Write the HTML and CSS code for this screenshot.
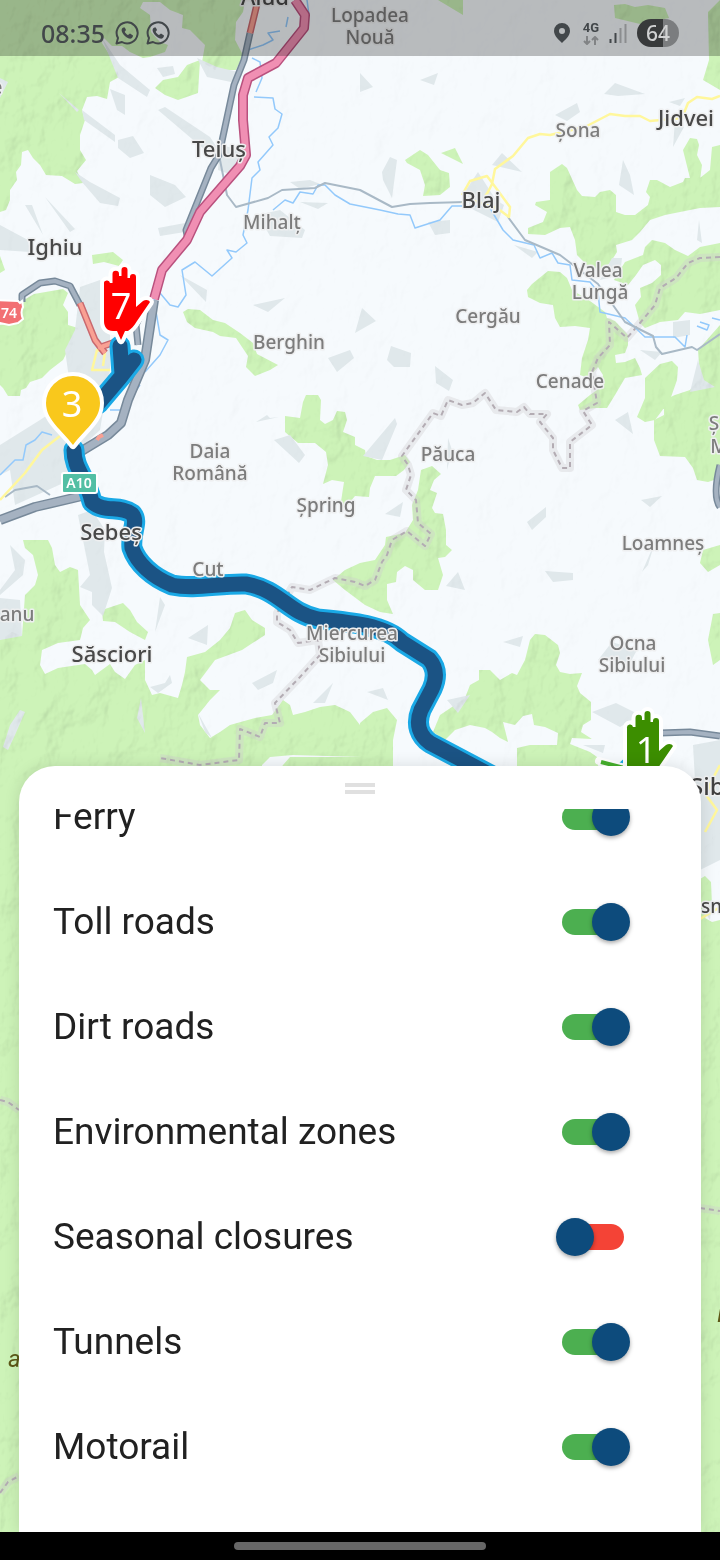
FILE: index.html
```
<!DOCTYPE html>
<html lang="en">

<head>
    <meta charset="UTF-8">
    <meta name="viewport" content="width=device-width, initial-scale=1.0">
    <title>Route options</title>
    <link rel="stylesheet" href="styles.css">
</head>

<body>
    <div class="screen">

        <!-- map -->
        <svg class="map" viewBox="0 0 720 1560" preserveAspectRatio="xMidYMin slice" role="img" aria-label="Route map">
            <defs>
                <filter id="relief" x="0" y="0" width="100%" height="100%">
                    <feTurbulence type="fractalNoise" baseFrequency="0.035 0.025" numOctaves="4" seed="8" />
                    <feDiffuseLighting surfaceScale="5" diffuseConstant="1.15" lighting-color="#fff">
                        <feDistantLight azimuth="225" elevation="60" />
                    </feDiffuseLighting>
                </filter>
                <path id="hand" d="M104 284a3 3 0 0 1 6-1h2.500V274a3 3 0 0 1 6.500 0v2h2.500V270a3 3 0 0 1 6 0v8h2.500V277a3 3 0 0 1 6 0v30l7-6c3-2 6-1 7 1l-13 19c-3 5-6 8-9 10h-3l-4 9-4-9h-4c-6 0-9-4-9-10Z" />
                <clipPath id="woods">
                    <use href="#forest" />
                </clipPath>
            </defs>

            <rect class="land" width="720" height="1560" />

            <path id="forest" class="forest" d="M0 0H245L243 12 236 22 235 40 243 55 236 70 215 70 202 62 205 45 190 30 182 28 183 15 170 10 160 2 143 2 140 8 150 15 151 32 160 42 168 45 165 52 150 57 143 58 130 52 122 46 112 46 103 37 102 43 116 65 119 77 110 82 107 99 97 96 87 97 82 110 85 120 80 135 80 150 86 160 77 171 83 183 75 184 62 176 46 175 40 165 33 158 28 150 22 152 21 165 16 172 17 180 10 190 10 200 6 210 0 212Z
                M155 88 163 80 178 77 187 65 200 60 198 93 178 100 165 95Z
                M92 255 113 252 123 260 119 266 104 262 93 264Z
                M0 256 5 270 0 273Z
                M24 300 34 294 63 289 68 293 63 305 68 312 68 325 78 328 72 340 73 345 68 350 63 360 50 370 42 378 30 382 26 388 21 390 20 396 8 396 3 388 0 385V325L20 322Z
                M183 312 188 309 200 310 213 320 225 323 240 333 253 343 257 354 278 365 270 370 255 376 246 367 248 356 236 338 220 336 213 332 195 328 187 322Z
                M306 395 318 395 321 400 320 420 325 424 333 420 337 411 345 412 347 420 343 432 355 437 355 445 365 450 366 456 377 460 390 460 405 455 410 462 404 470 396 476 375 476 370 488 369 497 355 496 345 508 340 508 344 482 332 480 323 484 328 465 326 452 315 443 298 443 285 432 285 416 300 418 303 402Z
                M421 470 432 466 441 474 434 480 430 490 437 493 432 508 435 513 443 514 446 530 446 545 452 550 445 557 438 558 443 575 438 590 425 590 413 580 413 570 405 566 397 572 396 582 387 584 387 600 393 614 380 612 365 605 345 590 333 580 345 570 360 563 375 560 385 545 386 537 405 533 413 520 412 505 418 490Z
                M550 172 562 164 567 168 577 190 582 196 595 197 600 192 610 190 616 195 616 212 625 215 635 215 648 205 650 197 646 192 650 180 657 180 670 187 683 182 685 178 700 178 710 170 712 147 720 145V207L700 208 665 215 650 220 640 232 632 240 616 245 617 252 610 263 600 270 588 266 577 255 575 240 570 227 560 228 545 235 528 234 528 228 543 222 547 212 535 205 536 202 550 200Z
                M683 150 690 138 697 139 699 145 697 155 702 165 700 180 690 178Z
                M614 280 625 262 643 255 645 247 652 240 665 243 675 250 688 256 700 247 720 243V310L700 314 685 312 678 320 660 322 645 328 640 323 635 305 641 297 640 288 652 283 661 275 661 265 655 260 643 265 636 275 628 285Z
                M527 290 532 284 548 271 560 272 567 278 572 290 590 301 605 312 607 318 615 321 628 335 628 345 625 353 615 355 616 363 625 362 635 358 640 368 642 375 625 378 615 395 607 408 595 408 580 410 578 405 590 395 600 388 603 375 598 367 588 378 580 375 582 358 588 340 590 328 575 326 560 327 555 318 553 305 540 303 528 297Z
                M645 378 660 364 672 361 678 367 677 380 670 400 655 420 645 422 637 417 645 398Z
                M698 350 720 325V478L708 482 697 480 693 468 685 457 660 456 654 440 654 420 664 415 664 400 675 395 690 390 700 378Z
                M703 550 720 545V565L708 572 700 563ZM713 614 720 613V660L713 665 708 640Z
                M405 160 420 150 428 155 440 170 449 173 450 187 440 195 423 196 425 185 420 170 407 163ZM441 153 455 148 463 164Z
                M614 5 625 4 635 7 648 5 665 8 669 18 640 24 615 18ZM438 0H463V15ZM708 12 720 0V90L703 80 709 60Z
                M535 634 545 635 558 645 560 653 556 665 560 672 570 674 582 673 577 686 580 693 591 702 591 720 583 725 581 732 592 739 572 738 570 744 590 752 597 757 600 780H517V748L530 745 557 745 558 733 545 727 534 725 532 714 523 716 515 725 503 722 508 742 500 738 492 732 485 728 470 725 455 730 445 740 433 732 440 715 455 705 465 698 470 685 479 680 479 670 490 670 500 680 512 673 517 675 525 660 530 640Z
                M360 723 373 712 387 708 397 720 393 740V800H260L283 765 290 757 360 757Z
                M23 540 48 540 52 548 55 565 60 572 70 567 78 570 80 605 90 620 83 628 80 640 58 643 42 650 40 665 45 674 58 668 85 664 92 670 95 675 110 664 115 672 125 679 135 665 145 660 145 680 152 695 160 693 178 698 182 685 185 672 187 657 205 652 220 640 230 628 235 613 245 610 252 620 265 628 265 635 242 650 215 660 200 680 210 690 220 690 210 700 198 715 200 725 210 738 220 732 230 725 255 718 272 715 283 700 290 705 293 715 305 712 320 707 335 705 350 712 360 725 362 757 293 755 270 757 262 765V820H60V1560H0V640L12 632 22 636 25 595 35 585 38 575 33 555 25 548Z
                M102 610 123 603 130 610 137 622 148 632 145 640 130 632 115 622 103 621Z
                M690 850 704 832 713 828 713 838 700 855ZM690 885 705 876 711 882 712 905 705 918 712 922 720 920V1560H690Z" />

            <!-- built-up areas -->
            <path class="town" d="M102 38 120 65 150 90 147 97 118 78ZM157 68 173 66 175 74 163 77ZM197 58 217 67 238 72 231 82 207 77ZM82 110 115 135 115 142 84 120ZM118 140 133 136 144 153 130 158 118 148ZM110 89 125 95 125 115 117 110ZM158 110 165 107 210 137 220 152 205 150ZM150 175 175 185 186 197 165 207 150 195ZM75 172 90 182 120 198 118 206 100 203 82 182ZM59 93 79 110 77 112ZM25 205 32 205 43 235ZM45 197 75 229 70 232ZM0 225 28 240 30 252 0 250ZM158 228 185 223 185 232 160 236ZM220 145 242 150 232 175 218 170ZM258 215 280 210 305 230 302 238 270 236ZM290 182 310 180 320 184 300 189ZM300 202 328 203 318 209ZM180 275 207 290 206 302ZM80 287 100 280 110 330 110 370 100 430 68 460 95 485 82 500 70 480 15 505 10 470 0 475V445L40 420 70 400 70 385 65 350 75 330ZM78 515 92 510 105 530 104 552 112 588 103 616 92 605 92 592 80 587 90 575ZM160 597 165 605 155 632ZM188 638 208 625 207 645ZM150 687 165 683 170 675 172 683 158 693ZM141 698 137 718 145 733ZM10 545 25 560 23 575 0 595V590L15 570ZM20 710 25 712 15 735 8 750 3 747 10 725ZM252 683 277 670 273 683 258 690ZM313 703 333 683 325 703ZM198 713 212 738 205 732ZM253 305 285 298 268 312ZM328 358 350 350 354 358 337 372ZM362 308 376 321 355 333ZM391 346 411 353 410 367 394 367 387 360ZM435 366 453 380 449 391 436 383ZM256 422 267 415 270 418 279 417ZM274 440 290 435 305 455 299 463ZM395 418 397 424 382 460 363 456ZM385 514 403 502 400 517ZM448 438 452 450 447 470ZM382 172 390 157 397 160 392 198 383 180ZM555 115 577 103 580 112 567 121ZM604 94 615 83 645 94 618 96ZM669 102 685 98 680 106ZM675 120 684 127 673 147ZM428 222 450 220 450 233 435 235ZM492 165 502 153 522 172ZM466 190 478 172 496 200 504 205 498 222 470 208ZM623 160 630 175 634 195 619 185ZM699 220 702 243 697 240ZM514 245 538 252 532 258ZM612 258 622 258 620 275 600 280ZM673 322 690 320 690 335 673 338ZM640 350 662 352 655 360ZM698 360 704 380 715 387 690 392ZM615 420 628 412 633 434ZM527 522 546 507 546 517 532 530ZM641 500 662 496 650 507ZM655 542 648 565 642 572ZM545 571 573 573 573 580 553 582ZM446 586 458 572 465 590ZM503 642 523 636 520 647ZM367 692 383 688 388 700ZM447 700 470 695 458 713ZM592 712 616 703 640 715 620 727ZM583 745 605 745 603 753ZM598 660 612 642 637 650 630 663ZM0 598 20 600 22 636 0 640ZM693 745 720 740V860L700 870ZM700 905 712 900 710 920ZM0 78 8 82 0 98ZM360 73 373 87 360 92ZM420 80 438 73 434 85Z" />

            <!-- hill shading -->
            <rect class="relief relief-light" width="720" height="1560" filter="url(#relief)" />
            <g class="relief" clip-path="url(#woods)">
                <rect width="720" height="1560" filter="url(#relief)" />
            </g>

            <!-- county borders -->
            <g class="border">
                <path id="border" d="M720 257 700 258 688 263 676 278 660 288 655 305 640 323 627 338 609 322 610 345 598 358 592 372 597 403 583 411 592 425 570 442 570 468 562 468 553 450 553 438 540 422 547 414 530 414 524 407 517 412 496 410 485 393 473 403 462 405 448 400 441 416 433 413 402 456 408 465 411 475 406 490 416 500 418 523 431 534 425 546 407 531 392 540 387 555 382 562 375 580 365 586 355 582 335 578 310 590 292 587 277 613 277 622 290 630 298 643 318 640 320 655 300 677 275 703 280 723 265 723 260 737 240 729 239 760 200 765 160 758" />
                <path d="M0 1100 8 1102 19 1110M0 1493 8 1482 19 1476M700 1208 720 1211" />
            </g>
            <use href="#border" class="border-dash" />
            <path class="border-dash" d="M0 1100 8 1102 19 1110M0 1493 8 1482 19 1476M700 1208 720 1211" />

            <!-- rivers -->
            <path class="river" d="M307 0 309 15 303 18M288 17 286 27M280 31 268 33 273 40 263 45 248 50M252 58 260 62 262 78 256 92M254 97 273 98 275 109 282 114 278 128 269 137 273 145 258 162 260 170 252 178 248 210 243 235 247 243 236 252 227 250 232 258 212 276 195 262 182 270 186 295 178 307 170 305 160 293 154 300 160 335 168 340 160 355 145 372M273 210 285 200 293 203 300 192 313 194 318 185 325 185 335 195 350 204 380 210 398 214 410 215 415 228 440 220 452 206 478 206 490 208 503 230 513 240 534 245 540 258 552 253 558 263 570 265 572 280 590 282 598 292 600 312 625 318 645 337 675 337 685 347 687 335M697 326 707 330 709 325 700 322M712 318 720 320M0 475 15 460 23 460 26 445 35 440 42 432 52 435M110 410 125 410 130 398 140 385" />

            <!-- secondary roads -->
            <path class="road-thin" d="M219 155 227 195 236 207 268 198 282 190 315 188 325 183 360 190 392 207 410 204 430 203 465 202M508 217 525 240 560 255 598 284 625 322 653 336 656 347 662 354 692 347 697 350 720 334M5 497 15 490 37 486 50 495" />
            <path class="road-yellow" d="M720 96 712 99 697 97 688 103 682 118 650 121 640 116 625 116 610 114 585 127 550 135 540 134 528 138 513 156 495 169 492 184 488 192 484 198M462 195 470 181 487 176 496 188 510 207 509 217 497 208 468 199 462 203M0 500 25 473 42 450 60 436M110 370 92 370 97 350 105 352 103 366M705 832 717 810 706 795 712 780 720 765M700 919 720 907" />

            <!-- main roads -->
            <g class="road-gray">
                <path class="casing" d="M250 33 244 60 234 85 219 155 211 168 186 230 188 240M22 302 22 295 40 283 55 281 70 286 80 305M720 736 690 732 660 733M720 465C715 485 715 500 720 507" />
                <path class="inner" d="M250 33 244 60 234 85 219 155 211 168 186 230 188 240M22 302 22 295 40 283 55 281 70 286 80 305M720 736 690 732 660 733M720 465C715 485 715 500 720 507" />
                <path class="casing wide" d="M0 520 35 507 82 496M80 452 108 435 121 423 128 400 145 360 154 300" />
                <path class="inner wide" d="M0 520 35 507 82 496M80 452 108 435 121 423 128 400 145 360 154 300" />
                <path class="casing" d="M145 305 136 325 138 345" />
                <path class="inner" d="M145 305 136 325 138 345" />
            </g>
            <g class="road-red">
                <path class="casing" d="M258 0 250 33M80 303 95 340 105 353M98 348 115 342" />
                <path class="inner" d="M258 0 250 33M80 303 95 340 105 353M98 348 115 342" />
                <path class="inner" d="M97 440 99 437 103 435" />
            </g>
            <g class="road-pink">
                <path class="casing" d="M295 0 305 15 304 28 276 63 248 78 243 95 243 120 246 155 240 166 200 212 187 240 162 270 154 299" />
                <path class="inner" d="M295 0 305 15 304 28 276 63 248 78 243 95 243 120 246 155 240 166 200 212 187 240 162 270 154 299" />
            </g>

            <!-- route -->
            <path class="route-edge" d="M120 346 122 374M134 360 120 378 98 404M74 450C74 470 86 476 92 502 104 513 120 505 132 514 139 522 130 532 132 548 137 563 152 577 172 585 195 590 220 583 246 584 280 590 288 613 318 619 350 622 385 625 402 642L429 659C437 668 437 678 432 689L421 710C415 725 420 736 430 743L500 780M625 772 640 758" />
            <path class="route" d="M120 346 122 374M134 360 120 378 98 404M74 450C74 470 86 476 92 502 104 513 120 505 132 514 139 522 130 532 132 548 137 563 152 577 172 585 195 590 220 583 246 584 280 590 288 613 318 619 350 622 385 625 402 642L429 659C437 668 437 678 432 689L421 710C415 725 420 736 430 743L500 780" />
            <path class="arrow-edge" d="M599 761 640 772" />
            <path class="arrow" d="M601 762 640 772" />

            <!-- road signs -->
            <rect class="sign sign-green" x="62" y="473" width="35" height="20" rx="2" />
            <text class="sign-text" x="79" y="488">A10</text>
            <path class="sign sign-red" d="M-10 300 18 301 20 303 22 301 23 307Q20 312 23 319L18 323 9 325 0 323H-10Z" />
            <text class="sign-text" x="9" y="318">74</text>

            <!-- place names -->
            <g class="place town-name">
                <text x="265" y="5">Aiud</text>
                <text x="219" y="157">Teiuș</text>
                <text x="55" y="255">Ighiu</text>
                <text x="481" y="208">Blaj</text>
                <text x="686" y="126">Jidvei</text>
                <text x="111" y="540">Sebeș</text>
                <text x="112" y="662">Săsciori</text>
            </g>
            <g class="place village">
                <text x="370" y="22">Lopadea</text>
                <text x="370" y="44">Nouă</text>
                <text x="578" y="137">Șona</text>
                <text x="272" y="229">Mihalț</text>
                <text x="598" y="277">Valea</text>
                <text x="600" y="299">Lungă</text>
                <text x="488" y="323">Cergău</text>
                <text x="289" y="349">Berghin</text>
                <text x="570" y="388">Cenade</text>
                <text x="210" y="458">Daia</text>
                <text x="210" y="480">Română</text>
                <text x="448" y="461">Păuca</text>
                <text x="326" y="512">Șpring</text>
                <text x="663" y="550">Loamneș</text>
                <text x="208" y="576">Cut</text>
                <text x="352" y="640">Miercurea</text>
                <text x="352" y="662">Sibiului</text>
                <text x="633" y="650">Ocna</text>
                <text x="632" y="672">Sibiului</text>
                <text x="17" y="621">anu</text>
                <text x="714" y="430">Ș</text>
                <text x="719" y="453">M</text>
                <text x="-3" y="94">e</text>
            </g>
            <g class="place city-name">
                <text x="690" y="795">Sibiu</text>
            </g>
            <text class="place cut-name" x="701" y="913">snădie</text>
            <text class="peak" x="8" y="1367">a</text>
            <text class="peak" x="717" y="1322">M</text>

            <!-- markers -->
            <g class="marker marker-red">
                <use href="#hand" />
                <text x="121" y="319">7</text>
            </g>
            <g class="marker marker-yellow">
                <path d="M73 445C62 430 46 420 46 403A27 27 0 0 1 100 403C100 420 84 430 73 445Z" />
                <text x="72" y="417">3</text>
            </g>
            <g class="marker marker-green">
                <use href="#hand" x="523" y="444" />
                <text x="646" y="763">1</text>
            </g>
        </svg>

        <!-- status bar -->
        <header class="status-bar">
            <div class="status-left">
                <time>08:35</time>
                <svg class="chat" viewBox="0 0 24 24" aria-hidden="true">
                    <path class="line" d="M1.500 22.500 3 17A10.500 10.500 0 1 1 7 21Z" />
                    <path d="M8.500 6.500C7 7 6 8.500 7 11c1.500 3 4 5.500 7 6.500 2 .5 4-.5 4-3l-3-2-2 1.500c-1.500-.7-2.700-2-3.300-3.300L11 9 9.800 6.500Z" />
                </svg>
                <svg class="chat" viewBox="0 0 24 24" aria-hidden="true">
                    <path class="line" d="M1.500 22.500 3 17A10.500 10.500 0 1 1 7 21Z" />
                    <path d="M8.500 6.500C7 7 6 8.500 7 11c1.500 3 4 5.500 7 6.500 2 .5 4-.5 4-3l-3-2-2 1.500c-1.500-.7-2.700-2-3.300-3.300L11 9 9.800 6.500Z" />
                </svg>
            </div>
            <div class="status-right">
                <svg class="pin" viewBox="0 0 16 20" aria-hidden="true">
                    <path fill-rule="evenodd" d="M8 0a8 8 0 0 1 8 8c0 5-5 9-8 12C5 17 0 13 0 8A8 8 0 0 1 8 0Zm0 5a3 3 0 1 0 0 6 3 3 0 0 0 0-6Z" />
                </svg>
                <div class="network">
                    <span>4G</span>
                    <svg viewBox="0 0 16 9" aria-hidden="true">
                        <path d="M4 0V8M1 5 4 8 7 5M12 9V1M9 4 12 1 15 4" />
                    </svg>
                </div>
                <svg class="signal" viewBox="0 0 18 20" aria-hidden="true">
                    <path d="M1.500 20V16M6.500 20V10" />
                    <path class="weak" d="M11.500 20V5M16.500 20V1" />
                </svg>
                <span class="battery">64</span>
            </div>
        </header>

        <!-- options sheet -->
        <main class="sheet">
            <div class="handle"></div>
            <div class="options">
                <ul class="option-list">
                    <li class="option">
                        <label for="ferry">Ferry</label>
                        <input type="checkbox" id="ferry" class="switch" checked>
                    </li>
                    <li class="option">
                        <label for="toll">Toll roads</label>
                        <input type="checkbox" id="toll" class="switch" checked>
                    </li>
                    <li class="option">
                        <label for="dirt">Dirt roads</label>
                        <input type="checkbox" id="dirt" class="switch" checked>
                    </li>
                    <li class="option">
                        <label for="zones">Environmental zones</label>
                        <input type="checkbox" id="zones" class="switch" checked>
                    </li>
                    <li class="option">
                        <label for="seasonal">Seasonal closures</label>
                        <input type="checkbox" id="seasonal" class="switch">
                    </li>
                    <li class="option">
                        <label for="tunnels">Tunnels</label>
                        <input type="checkbox" id="tunnels" class="switch" checked>
                    </li>
                    <li class="option">
                        <label for="motorail">Motorail</label>
                        <input type="checkbox" id="motorail" class="switch" checked>
                    </li>
                </ul>
            </div>
        </main>

        <div class="nav-bar">
            <div class="nav-pill"></div>
        </div>
    </div>
</body>

</html>
```
FILE: styles.css
```
* {
    box-sizing: border-box;
}

body {
    margin: 0;
    font-family: Roboto, "Liberation Sans", sans-serif;
    color: #212121;
}

.screen {
    position: relative;
    display: flex;
    flex-direction: column;
    min-height: 100vh;
    overflow: hidden;
}

/* map */
.map {
    position: absolute;
    top: 0;
    left: 0;
    width: 100%;
    height: 100%;
}

.land {
    fill: #f6fafd;
}

.forest {
    fill: #cdf3b8;
}

.town {
    fill: #e0e8eb;
}

.relief {
    mix-blend-mode: multiply;
    opacity: 0.25;
}

.relief-light {
    opacity: 0.08;
}

.border,
.border-dash,
.river,
.road-thin,
.road-yellow,
.casing,
.inner,
.route,
.route-edge,
.arrow,
.arrow-edge {
    fill: none;
    stroke-linejoin: round;
}

.border {
    stroke: #cfcbcf;
    stroke-opacity: 0.35;
    stroke-width: 8;
}

.border-dash {
    stroke: #b3acb3;
    stroke-width: 2;
    stroke-dasharray: 5 4;
}

.river {
    stroke: #93c9fb;
    stroke-width: 1.5;
}

.road-thin {
    stroke: #a9b9c6;
    stroke-width: 2;
}

.road-yellow {
    stroke: #fff79c;
    stroke-width: 2.5;
}

.casing {
    stroke-width: 7;
}

.inner {
    stroke-width: 4;
}

.wide.casing {
    stroke-width: 10;
}

.wide.inner {
    stroke-width: 7;
}

.road-gray .casing {
    stroke: #77899a;
}

.road-gray .inner {
    stroke: #a5b2c1;
}

.road-red .casing {
    stroke: #c9696f;
}

.road-red .inner {
    stroke: #f9a093;
}

.road-pink .casing {
    stroke: #b9517e;
    stroke-width: 10;
}

.road-pink .inner {
    stroke: #f08fb3;
    stroke-width: 7;
}

.route-edge {
    stroke: #1aa9e6;
    stroke-width: 21;
    stroke-linecap: round;
}

.route {
    stroke: #1b5384;
    stroke-width: 15;
    stroke-linecap: round;
}

.arrow-edge {
    stroke: #fff;
    stroke-width: 8;
    stroke-linecap: round;
}

.arrow {
    stroke: #45b02c;
    stroke-width: 4;
}

.sign {
    stroke: #fff;
    stroke-width: 2;
}

.sign-green {
    fill: #52bfa4;
}

.sign-red {
    fill: #f27073;
}

.sign-text {
    fill: #fff;
    font: 600 14px "Noto Sans", sans-serif;
    text-anchor: middle;
}

.place {
    font-family: "Noto Sans", sans-serif;
    font-size: 19px;
    font-weight: 500;
    text-anchor: middle;
    paint-order: stroke;
    stroke: #eeeff0;
    stroke-width: 3;
    stroke-linejoin: round;
}

.village {
    fill: #7c7c7c;
}

.town-name {
    fill: #484848;
    font-size: 22px;
}

.city-name {
    fill: #404040;
    font-size: 24px;
    text-anchor: start;
}

.cut-name {
    fill: #484848;
    text-anchor: start;
}

.peak {
    fill: #5c5716;
    font: italic 24px Roboto, sans-serif;
}

.marker path,
.marker use {
    stroke: #fff;
    stroke-width: 8;
    stroke-linejoin: round;
    paint-order: stroke;
}

.marker text {
    fill: #fff;
    font: 36px "Noto Sans", sans-serif;
    text-anchor: middle;
}

.marker-red {
    fill: #ff0000;
}

.marker-yellow {
    fill: #f9c81c;
}

.marker-green {
    fill: #3c8e00;
}

/* status bar */
.status-bar {
    position: relative;
    display: flex;
    justify-content: space-between;
    align-items: center;
    height: 56px;
    padding: 10px 41px 0;
    background: rgba(0, 0, 0, 0.25);
    color: #42474a;
    font-family: "Noto Sans", sans-serif;
}

.status-left,
.status-right {
    display: flex;
    align-items: center;
}

.status-left {
    gap: 7px;
    font-size: 25px;
    font-weight: 500;
}

.status-left time {
    margin-right: 3px;
}

.chat {
    width: 24px;
    height: 24px;
    fill: #42474a;
}

.chat .line {
    fill: none;
    stroke: #42474a;
    stroke-width: 2;
    stroke-linejoin: round;
}

.status-right {
    gap: 10px;
}

.pin {
    width: 16px;
    height: 20px;
    margin-right: 3px;
    fill: #42474a;
}

.network {
    display: flex;
    flex-direction: column;
    align-items: center;
    gap: 2px;
    font: bold 13px/12px Roboto, sans-serif;
}

.network svg {
    width: 16px;
    height: 9px;
    fill: none;
    stroke: #818385;
    stroke-width: 2;
}

.signal {
    width: 18px;
    height: 20px;
    stroke: #42474a;
    stroke-width: 2;
}

.signal .weak {
    stroke: #8b8d8f;
}

.battery {
    width: 42px;
    border-radius: 14px;
    background: linear-gradient(to right, #383a3b 62%, #7b7d7f 62%);
    color: #d0d1d2;
    font-size: 21px;
    font-weight: 500;
    line-height: 28px;
    text-align: center;
}

/* options sheet */
.sheet {
    position: relative;
    margin: auto 19px 0;
    background: #fff;
    border-radius: 36px 36px 0 0;
    box-shadow: 0 0 16px rgba(0, 0, 0, 0.12);
}

.handle {
    width: 30px;
    height: 43px;
    margin: 0 auto;
    padding: 17px 0 15px;
    background: linear-gradient(#e0e0e0 4px, #fff 4px, #fff 7px, #e0e0e0 7px) content-box;
}

.options {
    overflow: hidden;
}

/* list is scrolled a little, first row is half hidden */
.option-list {
    list-style: none;
    margin: -45px 0 0;
    padding: 0 77px 33px 34px;
}

.option {
    display: flex;
    justify-content: space-between;
    align-items: center;
    height: 105px;
    font-size: 37px;
}

.switch {
    appearance: none;
    position: relative;
    width: 62px;
    height: 26px;
    margin: 0;
    border-radius: 13px;
    background: #f44336;
    cursor: pointer;
}

.switch::before {
    content: "";
    position: absolute;
    top: -6px;
    left: -6px;
    width: 38px;
    height: 38px;
    border-radius: 50%;
    background: #0d4b7c;
    box-shadow: 0 2px 4px rgba(0, 0, 0, 0.35);
}

.switch:checked {
    background: #4caf50;
}

.switch:checked::before {
    left: 30px;
}

/* navigation bar */
.nav-bar {
    position: relative;
    display: flex;
    justify-content: center;
    align-items: center;
    height: 28px;
    background: #000;
}

.nav-pill {
    width: 35%;
    height: 8px;
    border-radius: 4px;
    background: #666;
}
```
